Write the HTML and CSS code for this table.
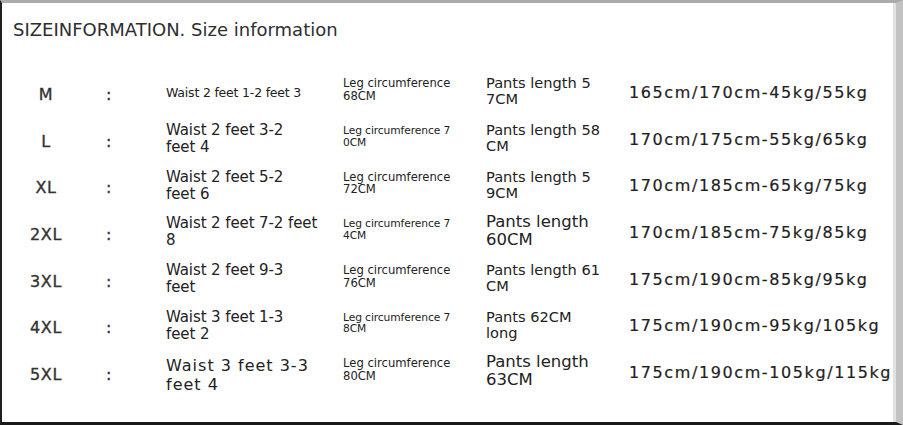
FILE: index.html
```html
<!DOCTYPE html>
<html lang="en">
<head>
<meta charset="utf-8">
<title>Size information</title>
<link rel="stylesheet" href="styles.css">
</head>
<body>
<div class="frame">
  <h1 class="title">SIZEINFORMATION. Size information</h1>
  <div class="table">
    <div class="row">
      <div class="size">M</div><div class="colon">:</div>
      <div class="waist w-sm">Waist 2 feet 1-2 feet 3</div>
      <div class="leg">Leg circumference<br>68CM</div>
      <div class="pants">Pants length 5<br>7CM</div>
      <div class="hw">165cm/170cm-45kg/55kg</div>
    </div>
    <div class="row">
      <div class="size">L</div><div class="colon">:</div>
      <div class="waist">Waist 2 feet 3-2<br>feet 4</div>
      <div class="leg leg-sm">Leg circumference 7<br>0CM</div>
      <div class="pants">Pants length 58<br>CM</div>
      <div class="hw">170cm/175cm-55kg/65kg</div>
    </div>
    <div class="row">
      <div class="size">XL</div><div class="colon">:</div>
      <div class="waist">Waist 2 feet 5-2<br>feet 6</div>
      <div class="leg">Leg circumference<br>72CM</div>
      <div class="pants">Pants length 5<br>9CM</div>
      <div class="hw">170cm/185cm-65kg/75kg</div>
    </div>
    <div class="row">
      <div class="size">2XL</div><div class="colon">:</div>
      <div class="waist">Waist 2 feet 7-2 feet<br>8</div>
      <div class="leg leg-sm">Leg circumference 7<br>4CM</div>
      <div class="pants p-lg">Pants length<br>60CM</div>
      <div class="hw">170cm/185cm-75kg/85kg</div>
    </div>
    <div class="row">
      <div class="size">3XL</div><div class="colon">:</div>
      <div class="waist">Waist 2 feet 9-3<br>feet</div>
      <div class="leg">Leg circumference<br>76CM</div>
      <div class="pants">Pants length 61<br>CM</div>
      <div class="hw">175cm/190cm-85kg/95kg</div>
    </div>
    <div class="row">
      <div class="size">4XL</div><div class="colon">:</div>
      <div class="waist">Waist 3 feet 1-3<br>feet 2</div>
      <div class="leg leg-sm">Leg circumference 7<br>8CM</div>
      <div class="pants">Pants 62CM<br>long</div>
      <div class="hw">175cm/190cm-95kg/105kg</div>
    </div>
    <div class="row">
      <div class="size">5XL</div><div class="colon">:</div>
      <div class="waist w-lg">Waist 3 feet 3-3<br>feet 4</div>
      <div class="leg">Leg circumference<br>80CM</div>
      <div class="pants p-lg">Pants length<br>63CM</div>
      <div class="hw">175cm/190cm-105kg/115kg</div>
    </div>
  </div>
</div>
</body>
</html>
```

FILE: styles.css
```css
html, body {
  margin: 0;
  padding: 0;
  background: #ffffff;
}
body {
  font-family: "DejaVu Sans", "Noto Sans", sans-serif;
  color: #222;
}
.frame {
  box-sizing: border-box;
  width: 903px;
  height: 425px;
  border-top: 3px solid #ababab;
  border-left: 2px solid #1f1f1f;
  border-right: 7px solid #c2c2c2;
  border-bottom: 3px solid #1a1a1a;
  background: #fff;
  box-shadow: inset -3px 0 0 #e2e2e2;
}
.title {
  margin: 16px 0 0 11px;
  font-size: 18px;
  font-weight: normal;
  line-height: 21px;
  color: #2e2e2e;
}
.table {
  margin-top: 29px;
  padding-left: 14px;
  display: flex;
  flex-direction: column;
}
.row {
  display: grid;
  grid-template-columns: 60px 90px 177px 143px 143px 1fr;
  align-items: center;
  height: 46.7px;
}
.size {
  text-align: center;
  font-size: 16px;
  letter-spacing: 0.6px;
  color: #333;
  -webkit-text-stroke: 0.35px #333;
  padding-top: 4px;
}
.colon {
  padding-left: 30px;
  font-size: 16px;
  color: #333;
  -webkit-text-stroke: 0.3px #333;
  padding-top: 4px;
}
.waist {
  font-size: 15px;
  line-height: 17px;
  letter-spacing: -0.1px;
}
.w-sm {
  font-size: 12.5px;
  letter-spacing: -0.2px;
}
.w-lg {
  font-size: 16px;
  line-height: 19px;
  letter-spacing: 1px;
  padding-top: 6px;
}
.leg {
  font-size: 11.6px;
  line-height: 12.5px;
  margin-top: -5px;
}
.leg-sm {
  font-size: 10.7px;
  line-height: 11.5px;
  letter-spacing: -0.1px;
}
.pants {
  font-size: 14.6px;
  line-height: 16px;
  letter-spacing: 0;
  margin-top: -2px;
}
.p-lg {
  font-size: 16.5px;
  line-height: 18px;
  letter-spacing: 0;
}
.hw {
  font-size: 16px;
  letter-spacing: 1.6px;
  color: #1e1e1e;
  -webkit-text-stroke: 0.2px #1e1e1e;
}
```
